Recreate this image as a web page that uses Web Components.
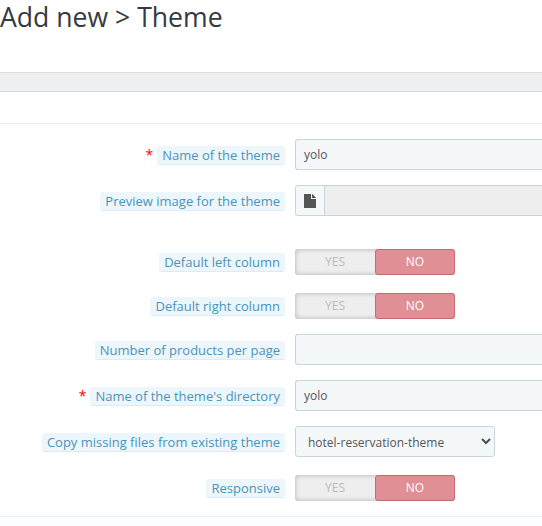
<!DOCTYPE html>
<html lang="en">
<head>
<meta charset="utf-8">
<title>Add new &gt; Theme</title>
<style>
html, body { margin: 0; height: 100%; overflow: hidden; }
body { font-family: "Open Sans", "Noto Sans", sans-serif; background: #fff; color: #555; }
</style>
</head>
<body>
<theme-page>
  <page-title slot="title">Add new &gt; Theme</page-title>
  <form-row required><span slot="label">Name of the theme</span><text-field>yolo</text-field></form-row>
  <form-row style="margin-bottom:33px"><span slot="label">Preview image for the theme</span><file-field></file-field></form-row>
  <form-row kind="switch" style="margin-bottom:18px"><span slot="label">Default left column</span><yes-no></yes-no></form-row>
  <form-row kind="switch"><span slot="label">Default right column</span><yes-no></yes-no></form-row>
  <form-row><span slot="label">Number of products per page</span><text-field></text-field></form-row>
  <form-row required><span slot="label">Name of the theme's directory</span><text-field>yolo</text-field></form-row>
  <form-row style="margin-bottom:18px"><span slot="label">Copy missing files from existing theme</span><select-field>hotel-reservation-theme</select-field></form-row>
  <form-row kind="switch"><span slot="label">Responsive</span><yes-no></yes-no></form-row>
</theme-page>
<script>
function define(name, html) {
  const template = document.createElement('template');
  template.innerHTML = html;
  customElements.define(name, class extends HTMLElement {
    constructor() {
      super();
      this.attachShadow({ mode: 'open' }).append(template.content.cloneNode(true));
    }
  });
}

define('page-title', `
<style>
:host { display: block; height: 72px; font-size: 26.6px; line-height: 34px; color: #363a41; white-space: nowrap; }
</style><slot></slot>`);

define('theme-page', `
<style>
:host { display: flex; flex-direction: column; height: 526px; overflow: hidden; }
.bar { height: 18px; background: #eff0f2; border-top: 1px solid #dcdede; border-bottom: 1px solid #d3d8db; }
.gap { height: 31px; border-bottom: 1px solid #eaedef; }
form { margin: 0; padding-top: 15px; }
.footer { flex: 1; border-top: 1px solid #eaedef; background: #fcfdfe; }
</style>
<slot name="title"></slot>
<div class="bar"></div><div class="gap"></div>
<form><slot></slot></form>
<div class="footer"></div>`);

define('form-row', `
<style>
:host { display: grid; grid-template-columns: 285px 1fr; column-gap: 10px; height: 31px; margin-bottom: 15px; }
:host([kind=switch]) { height: 26px; }
.label { display: flex; justify-content: flex-end; padding-top: 7px; font-size: 13px; line-height: 18px; }
:host([kind=switch]) .label { padding-top: 4px; }
.star { display: none; color: #f00; font-size: 14px; margin-right: 4px; line-height: 18px; }
:host([required]) .star { display: block; }
.tag { height: 18px; padding: 0 5px; background: #edf7fb; border-bottom: 1px solid #d8edf7; border-radius: 3px; color: #4a93bb; white-space: nowrap; }
</style>
<div class="label"><span class="star">*</span><span class="tag"><slot name="label"></slot></span></div>
<slot></slot>`);

define('text-field', `
<style>
:host { display: block; box-sizing: border-box; height: 31px; padding: 0 8px; border: 1px solid #c7d6db; border-right: 0; border-radius: 3px 0 0 3px; background: #f5f8f9; font-size: 12px; line-height: 29px; color: #555; }
</style><slot></slot>`);

define('file-field', `
<style>
:host { display: flex; box-sizing: border-box; height: 31px; border: 1px solid #c7d6db; border-right: 0; border-radius: 3px 0 0 3px; background: #eee; overflow: hidden; }
.addon { width: 28px; border-right: 1px solid #c7d6db; background: #f5f8f9; }
svg { display: block; margin: 8px 0 0 8px; }
</style>
<div class="addon"><svg width="12" height="14" viewBox="0 0 12 14" fill="#555"><path d="M0 0h7v5h5v8.4q0 .6-.6.6H.6Q0 14 0 13.400z"/><path d="M8 0l.8.4 2.800 2.800.4.8H8z"/></svg></div>`);

define('select-field', `
<style>
:host { display: flex; justify-content: space-between; box-sizing: border-box; width: 200px; height: 31px; padding: 0 3px 0 12px; border: 1px solid #c7d6db; border-radius: 3px; background: #f5f8f9; font-size: 12px; line-height: 31px; color: #555; }
svg { display: block; margin-top: 11px; }
</style><span><slot></slot></span>
<svg width="10" height="7" viewBox="0 0 10 7" fill="none" stroke="#494c50" stroke-width="2"><path d="M1 1l4 4 4-4"/></svg>`);

define('yes-no', `
<style>
:host { display: flex; width: 160px; height: 26px; border-radius: 3px; background: #eee; box-shadow: inset 0 0 5px rgba(0,0,0,.27); font-size: 12px; line-height: 26px; text-align: center; color: #bbb; }
span { width: 80px; }
.on { box-sizing: border-box; border: 1px solid #c9686e; border-radius: 3px; background: #e08f95; color: #fff; line-height: 24px; }
</style><span>YES</span><span class="on">NO</span>`);
</script>
</body>
</html>
